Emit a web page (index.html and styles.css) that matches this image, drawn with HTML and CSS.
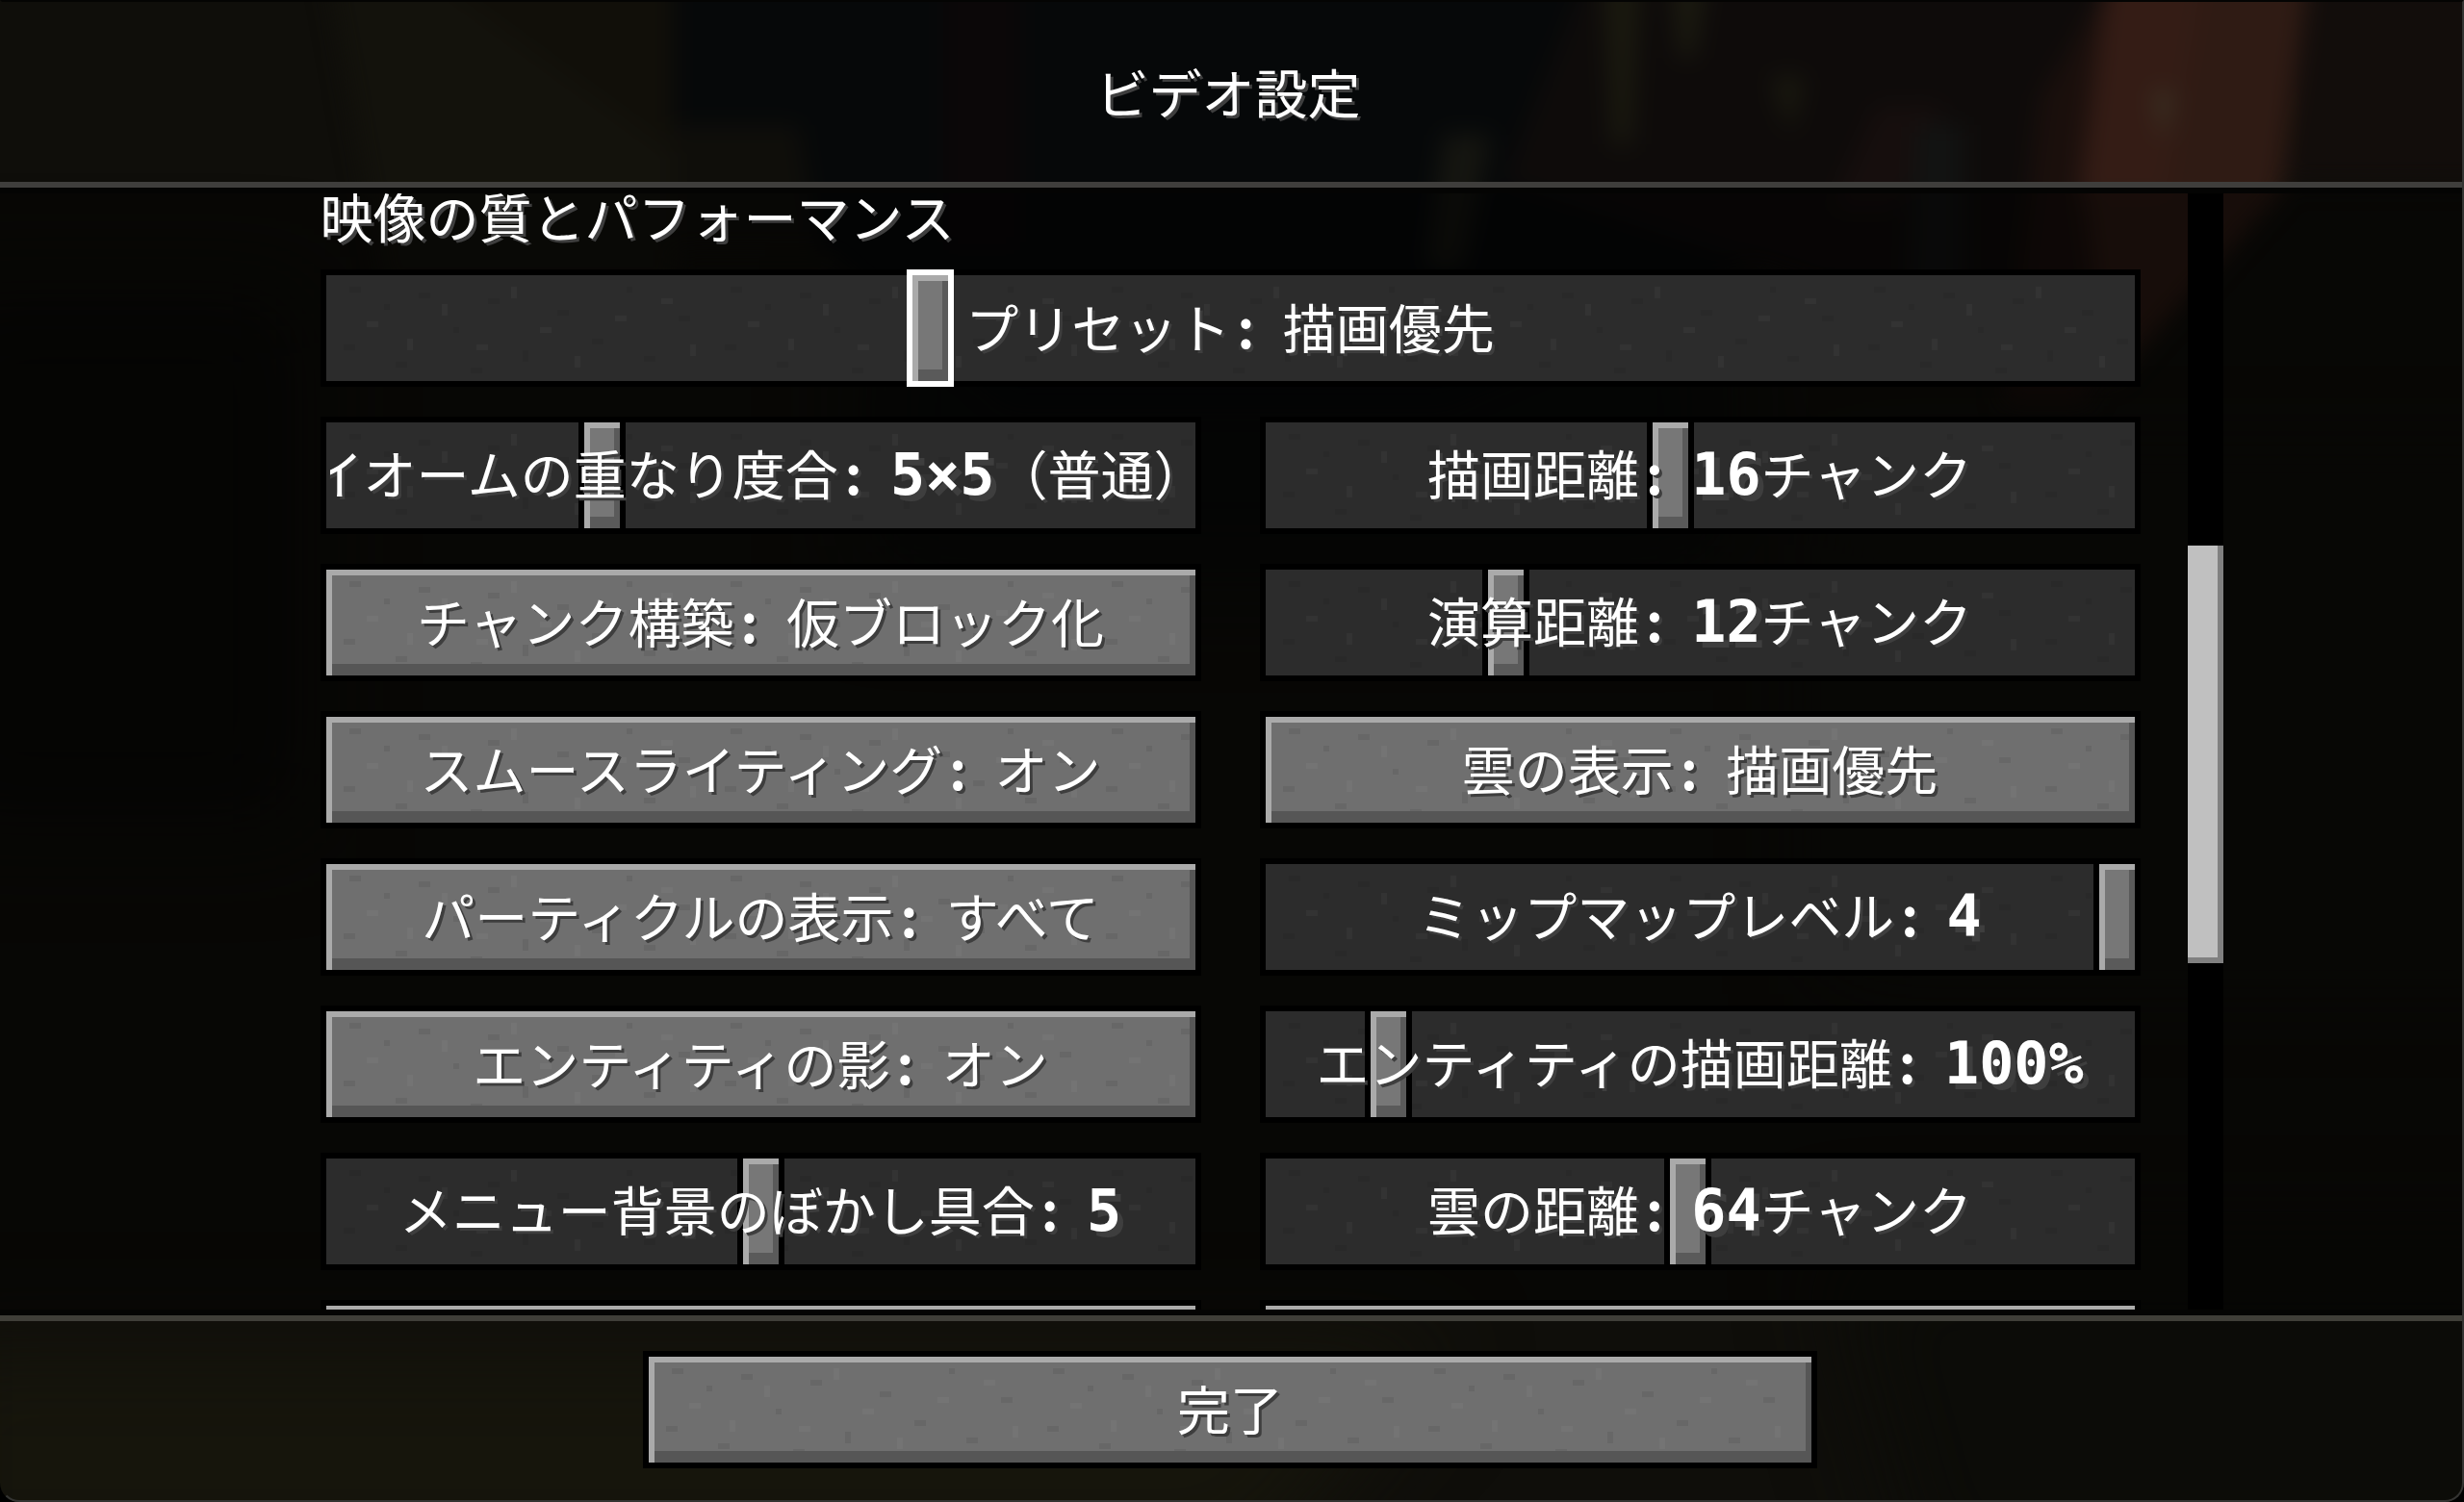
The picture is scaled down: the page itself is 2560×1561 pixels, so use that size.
FILE: index.html
```
<!DOCTYPE html>
<html lang="ja">
<head>
  <meta charset="UTF-8" />
  <meta name="viewport" content="width=device-width, initial-scale=1.0"/>
  <title>ビデオ設定</title>
  <link rel="stylesheet" href="styles.css">
</head>
<body>

  <!-- blurred world behind the menu -->
  <svg class="scene" viewBox="0 0 2560 1561" preserveAspectRatio="none" aria-hidden="true">
    <defs>
      <filter id="soft" x="-20%" y="-20%" width="140%" height="140%" color-interpolation-filters="sRGB"><feGaussianBlur stdDeviation="12"/></filter>
      <filter id="wide" x="-20%" y="-20%" width="140%" height="140%" color-interpolation-filters="sRGB"><feGaussianBlur stdDeviation="50"/></filter>
    </defs>
    <rect width="2560" height="1561" fill="#0f0e0a"/>
    <g filter="url(#wide)">
      <rect x="-80" y="300" width="400" height="560" fill="#0a0a07"/>
      <rect x="900" y="300" width="900" height="300" fill="#090a09"/>
      <rect x="1900" y="500" width="760" height="500" fill="#0f0f0b"/>
      <path d="M-80 1400H1500L1300 1640H-80Z" fill="#16150c"/>
      <path d="M1900 1300H2660V1660H2000Z" fill="#0c0c08"/>
    </g>
    <g filter="url(#soft)">
      <path d="M340 -30H700V300H400Z" fill="#13120c"/>
      <path d="M440 -30L700 160V-30Z" fill="#110f09"/>
      <path d="M700 -30H2010V190L1500 420H1050L860 260H700Z" fill="#060809"/>
      <path d="M980 -30H1060V260H980Z" fill="#0b0708"/>
      <path d="M700 130H830L850 260H700Z" fill="#0f0e0a"/>
      <path d="M1650 -30H2200L2120 300H1900L1560 190Z" fill="#0e0b0a"/>
      <path d="M1665 -30H1705L1695 150H1675Z" fill="#1a190f"/>
      <path d="M1735 -30H1775L1760 60H1745Z" fill="#1b1a10"/>
      <path d="M1840 80H1875L1860 140Z" fill="#1a190f"/>
      <path d="M1500 140H1550L1520 280H1480Z" fill="#151510"/>
      <path d="M1950 110H2020L1970 220H1900Z" fill="#160e0d"/>
      <path d="M1990 130H2040V320H1980Z" fill="#121312"/>
      <path d="M2120 100L2200 -30L2170 420H2080Z" fill="#1a0f0c"/>
      <path d="M2200 -30H2400L2370 200L2190 400L2165 200Z" fill="#2f1b14"/>
      <path d="M2190 -30H2290L2250 200H2160Z" fill="#341c15"/>
      <path d="M2400 -30H2600V190H2375Z" fill="#120d0b"/>
      <path d="M2240 95H2255L2248 150Z" fill="#3d3a2a"/>
    </g>
  </svg>

  <header>
    <h1>ビデオ設定</h1>
  </header>

  <main>
    <section class="list">
      <h2>映像の質とパフォーマンス</h2>

      <div class="options">
        <div class="slider wide">
          <input type="range" id="preset" min="0" max="1000" value="331" class="focused">
          <label for="preset"><span>プリセット<i>:</i> 描画優先</span></label>
        </div>

        <div class="slider">
          <input type="range" id="biome" min="0" max="1000" value="310">
          <label for="biome" class="scrolling"><span>バイオームの重なり度合<i>:</i> <b>5×5</b>（普通）</span></label>
        </div>
        <div class="slider">
          <input type="range" id="render" min="0" max="1000" value="465">
          <label for="render"><span>描画距離<i>:</i> <b>16</b>チャンク</span></label>
        </div>

        <button type="button"><span>チャンク構築<i>:</i> 仮ブロック化</span></button>
        <div class="slider">
          <input type="range" id="simulation" min="0" max="1000" value="267">
          <label for="simulation"><span>演算距離<i>:</i> <b>12</b>チャンク</span></label>
        </div>

        <button type="button"><span>スムースライティング<i>:</i> オン</span></button>
        <button type="button"><span>雲の表示<i>:</i> 描画優先</span></button>

        <button type="button"><span>パーティクルの表示<i>:</i> すべて</span></button>
        <div class="slider">
          <input type="range" id="mipmap" min="0" max="4" value="4">
          <label for="mipmap"><span>ミップマップレベル<i>:</i> <b>4</b></span></label>
        </div>

        <button type="button"><span>エンティティの影<i>:</i> オン</span></button>
        <div class="slider">
          <input type="range" id="entity" min="0" max="1000" value="126">
          <label for="entity"><span>エンティティの描画距離<i>:</i> <b>100%</b></span></label>
        </div>

        <div class="slider">
          <input type="range" id="blur" min="0" max="10" value="5">
          <label for="blur"><span>メニュー背景のぼかし具合<i>:</i> <b>5</b></span></label>
        </div>
        <div class="slider">
          <input type="range" id="clouds" min="0" max="1000" value="486">
          <label for="clouds"><span>雲の距離<i>:</i> <b>64</b>チャンク</span></label>
        </div>

        <button type="button" aria-label="次の設定 1"></button>
        <button type="button" aria-label="次の設定 2"></button>
      </div>
    </section>

    <div class="scrollbar"><div class="thumb"></div></div>
  </main>

  <footer>
    <button type="button" class="done"><span>完了</span></button>
  </footer>

</body>
</html>
```
FILE: styles.css
```
:root {
  --stone: url("data:image/svg+xml,%3Csvg xmlns='http://www.w3.org/2000/svg' width='396' height='110'%3E%3Cg fill='%23000' fill-opacity='.07'%3E%3Crect x='24' y='12' width='12' height='6'/%3E%3Crect x='60' y='30' width='6' height='6'/%3E%3Crect x='96' y='18' width='12' height='6'/%3E%3Crect x='132' y='54' width='6' height='6'/%3E%3Crect x='18' y='72' width='12' height='6'/%3E%3Crect x='72' y='90' width='12' height='6'/%3E%3Crect x='168' y='24' width='12' height='6'/%3E%3Crect x='204' y='78' width='6' height='12'/%3E%3Crect x='240' y='36' width='12' height='6'/%3E%3Crect x='276' y='66' width='12' height='6'/%3E%3Crect x='312' y='12' width='6' height='6'/%3E%3Crect x='330' y='84' width='12' height='6'/%3E%3Crect x='366' y='42' width='12' height='6'/%3E%3Crect x='150' y='96' width='12' height='6'/%3E%3C/g%3E%3Cg fill='%23fff' fill-opacity='.03'%3E%3Crect x='42' y='48' width='12' height='6'/%3E%3Crect x='84' y='66' width='6' height='12'/%3E%3Crect x='120' y='30' width='6' height='12'/%3E%3Crect x='156' y='72' width='12' height='6'/%3E%3Crect x='192' y='12' width='6' height='12'/%3E%3Crect x='222' y='54' width='12' height='6'/%3E%3Crect x='258' y='84' width='6' height='12'/%3E%3Crect x='300' y='42' width='12' height='6'/%3E%3Crect x='348' y='24' width='12' height='6'/%3E%3Crect x='378' y='72' width='6' height='12'/%3E%3C/g%3E%3C/svg%3E");
}

* {
  box-sizing: border-box;
}

body {
  margin: 0;
  height: 100vh;
  display: flex;
  flex-direction: column;
  overflow: hidden;
  background: #0b0b08;
  color: white;
  font-family: 'Noto Sans CJK JP', sans-serif;
  font-size: 55px;
  font-weight: 400;
  line-height: 60px;
  text-shadow: 3px 3px #3e3e3e;
}

/* window edge with rounded bottom corners */
body::after {
  content: '';
  position: absolute;
  inset: 0;
  border: 2px solid #343432;
  border-top-color: #040403;
  border-left-color: transparent;
  border-radius: 0 0 20px 20px;
  box-shadow: 0 0 0 20px black;
  pointer-events: none;
}

h1, h2 {
  margin: 0;
  font-size: 55px;
  font-weight: 400;
}

/* colon and digits sit on the narrow half-width grid */
i {
  display: inline-block;
  width: 32px;
  margin-right: 10px;
  font-style: normal;
  font-weight: 700;
  text-align: center;
}

b {
  font-family: 'DejaVu Sans Mono', monospace;
  font-size: 60px;
  font-weight: 700;
  line-height: 60px;
  text-shadow: 6px 6px #3e3e3e;
}

.scene {
  position: absolute;
  inset: 0;
  width: 100%;
  height: 100%;
  z-index: -1;
}

header {
  height: 201px;
  flex-shrink: 0;
  display: flex;
  align-items: center;
  justify-content: center;
  padding: 0 8px 8px 0;
  border-bottom: 6px solid #040403;
  box-shadow: inset 0 -6px #3f3e3c;
}

main {
  flex: 1;
  min-height: 0;
  display: grid;
  grid-template-columns: 1fr minmax(0, 1891px) 1fr;
  padding-right: 4px;
  overflow: hidden;
  background: rgba(0, 0, 0, 0.5);
}

.list {
  grid-column: 2;
  min-height: 0;
}

.list h2 {
  height: 79px;
  line-height: 44px;
}

.options {
  display: grid;
  grid-template-columns: 1fr 1fr;
  grid-auto-rows: 122px;
  gap: 31px 61px;
}

.wide {
  grid-column: 1 / -1;
}

.slider {
  position: relative;
  border: 6px solid black;
  background: var(--stone) #2c2c2c;
}

.slider input {
  -webkit-appearance: none;
  appearance: none;
  display: block;
  width: calc(100% + 12px);
  height: 122px;
  margin: -6px;
  background: none;
  outline: none;
}

.slider input::-webkit-slider-thumb {
  -webkit-appearance: none;
  width: 49px;
  height: 122px;
  border: 6px solid black;
  background: #777;
  box-shadow: inset 0 6px #aaa, inset 6px 0 #aaa, inset -6px -12px #5a5a5a;
}

.slider input.focused::-webkit-slider-thumb {
  border-color: white;
}

.slider label {
  position: absolute;
  inset: 0 4px;
  display: flex;
  align-items: center;
  justify-content: center;
  padding-bottom: 6px;
  overflow: hidden;
  white-space: nowrap;
  pointer-events: none;
}

/* label too long for its slider, caught at the end of its scroll */
.slider .scrolling {
  justify-content: flex-end;
}

.scrolling span {
  margin-right: -16px;
}

button {
  min-width: 0;
  height: 122px;
  padding: 0 0 6px;
  border: 6px solid black;
  background: var(--stone) #6f6f6f;
  box-shadow: inset 0 6px #aaa, inset 6px 0 #aaa, inset -6px -12px #565656;
  color: white;
  font: inherit;
  text-shadow: 3px 3px #3e3e3e;
  white-space: nowrap;
}

.scrollbar {
  width: 37px;
  margin-left: 49px;
  padding-top: 366px;
  background: black;
}

.thumb {
  height: 434px;
  background: #c0c0c0;
  box-shadow: inset -6px -6px #808080;
}

footer {
  height: 200px;
  flex-shrink: 0;
  display: flex;
  justify-content: center;
  padding: 37px 4px 0 0;
  border-top: 6px solid #040403;
  box-shadow: inset 0 6px #3f3e38;
}

.done {
  width: 1220px;
}
```
